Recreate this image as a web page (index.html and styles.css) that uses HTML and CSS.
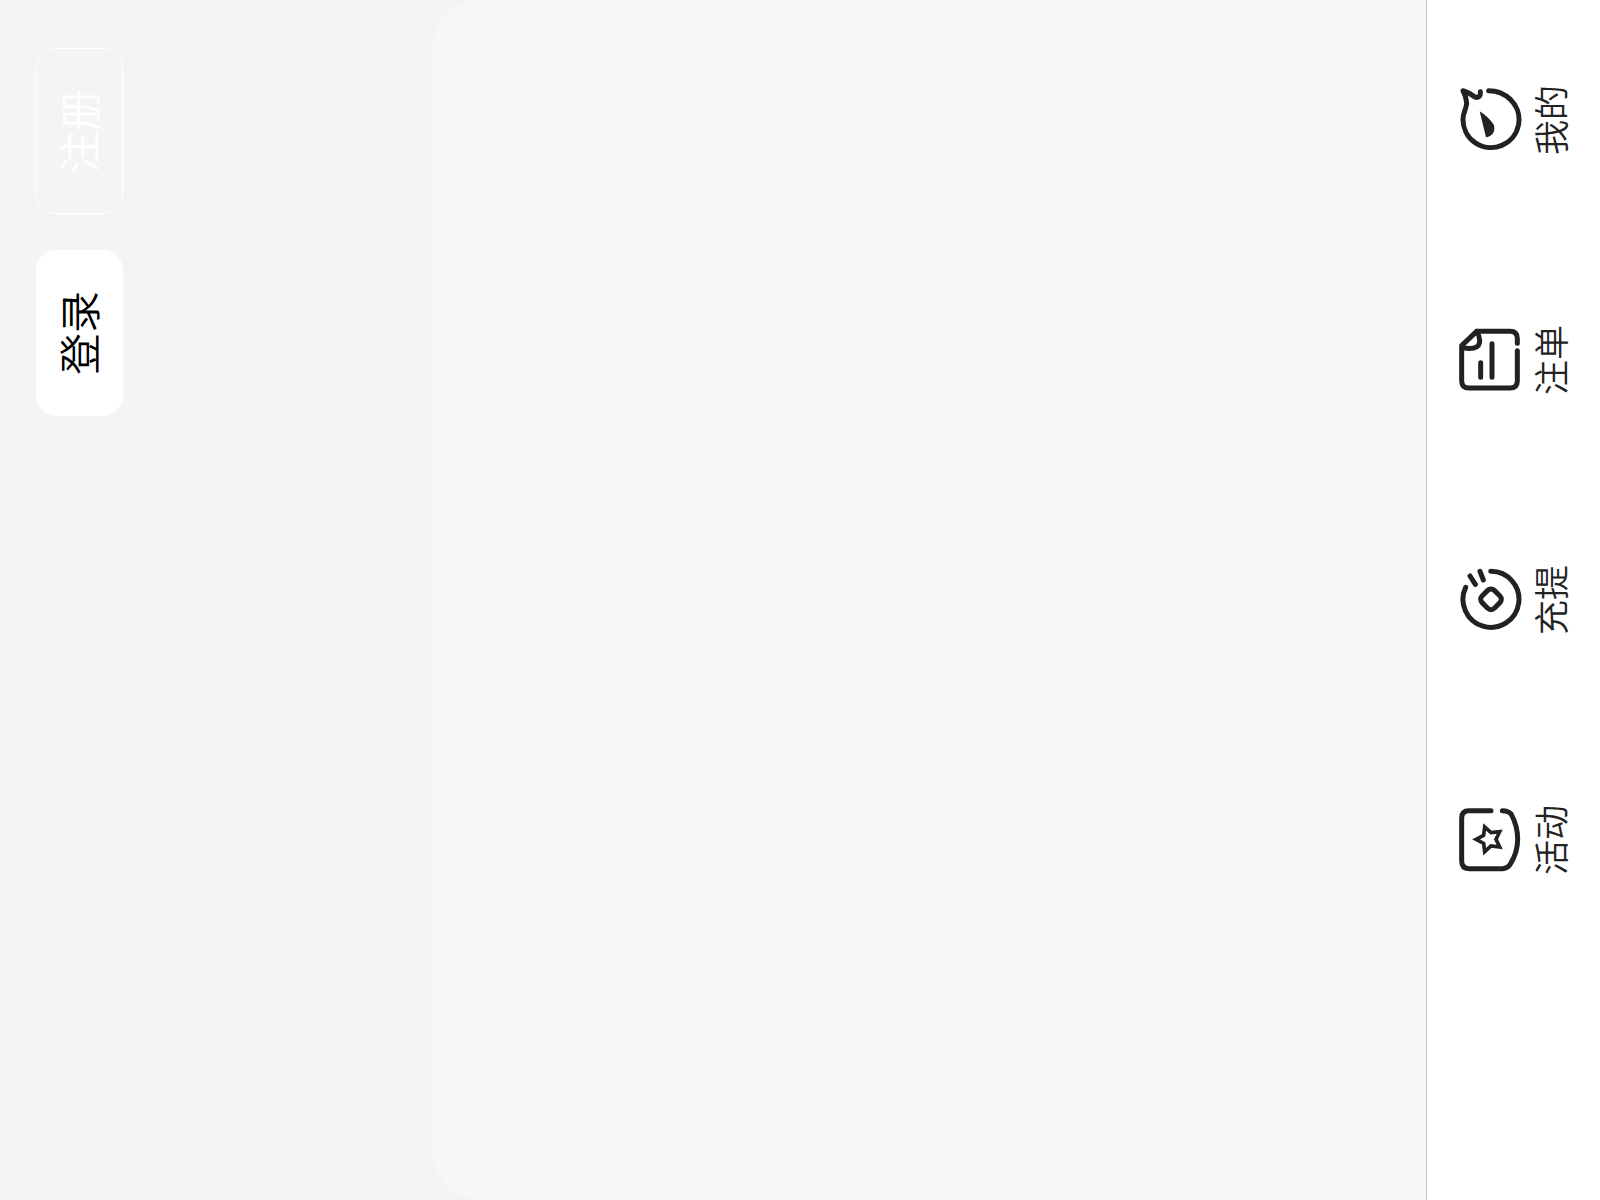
FILE: index.html
```html
<!DOCTYPE html>
<html lang="zh-CN">
<head>
    <meta charset="UTF-8">
    <meta name="viewport" content="width=device-width, initial-scale=1.0">
    <title>首页</title>
    <link rel="stylesheet" href="styles.css">
</head>
<body>
    <!-- portrait app, turned on its side -->
    <div class="app">
        <header class="header">
            <button type="button" class="btn btn-login">登录</button>
            <button type="button" class="btn btn-register">注册</button>
        </header>

        <main class="content"></main>

        <nav class="tabbar">
            <div class="tab"></div>
            <a class="tab" href="#activity">
                <svg class="tab-icon" viewBox="0 0 192 192" aria-hidden="true">
                    <path d="M184 99V33Q184 11 162 11H33Q10 11 10 33V134Q10 148 22 156Q58 179 98 179Q138 179 173 160Q184 152 184 133"/>
                    <path class="thin" d="M98 54L110 77L135 80L118 99L121 125L98 114L75 125L78 99L61 80L86 77Z"/>
                </svg>
                <span>活动</span>
            </a>
            <a class="tab" href="#wallet">
                <svg class="tab-icon" viewBox="0 0 192 192" aria-hidden="true">
                    <path d="M182 98A84 84 0 1 1 134 23"/>
                    <path d="M168 36L143 52M182 66L156 76"/>
                    <rect x="72" y="73" width="52" height="52" rx="14" transform="rotate(45 98 99)"/>
                </svg>
                <span>充提</span>
            </a>
            <a class="tab" href="#bets">
                <svg class="tab-icon" viewBox="0 0 192 192" aria-hidden="true">
                    <path d="M146 178H160Q182 178 182 156V56L139 11H34Q12 11 12 33V156Q12 178 34 178H124"/>
                    <path d="M182 56Q162 68 146 64Q126 60 132 16"/>
                    <path d="M88 68H44M145 102H44"/>
                </svg>
                <span>注单</span>
            </a>
            <a class="tab" href="#mine">
                <svg class="tab-icon" viewBox="0 0 192 192" aria-hidden="true">
                    <path d="M184 92Q184 130 158 157A84 84 0 1 1 98 15C120 15 130 26 148 26Q168 24 184 15Q178 34 168 46Q160 56 167 64Q172 68 181 67"/>
                    <path class="solid" d="M122 65Q106 91 81 108Q50 114 44 84Z"/>
                </svg>
                <span>我的</span>
            </a>
        </nav>
    </div>
</body>
</html>
```
FILE: styles.css
```css
* {
    box-sizing: border-box;
}
body {
    margin: 0;
    background-color: #f4f4f4;
    font-family: "Noto Sans CJK SC", sans-serif;
}
/* text runs bottom to top, rows stack left to right */
.app {
    display: flex;
    flex-direction: column;
    width: 100%;
    height: 100vh;
    writing-mode: sideways-lr;
}
.header {
    display: flex;
    justify-content: flex-end;
    align-items: flex-start;
    gap: 36px;
    width: 433px;
    padding: 48px 36px;
}
.btn {
    width: 87px;
    height: 166px;
    padding: 0 4px 0 0;
    border: 1px solid #fff;
    border-radius: 20px;
    font-family: inherit;
    font-size: 42px;
    font-weight: 350;
    line-height: 48px;
    writing-mode: sideways-lr;
    cursor: pointer;
}
.btn-login {
    background: #fff;
    color: #000;
}
.btn-register {
    background: transparent;
    color: #fff;
}
.content {
    flex: 1;
    border-radius: 48px 0 0 48px;
    background: #f7f7f7;
}
.tabbar {
    display: flex;
    width: 174px;
    border-left: 1px solid #c8c8c8;
    background: #fff;
}
.tab {
    flex: 1;
    display: flex;
    flex-direction: column;
    align-items: center;
    gap: 10px;
    padding-left: 31px;
    color: #222;
    font-size: 35px;
    font-weight: 350;
    line-height: 36px;
    text-decoration: none;
}
.tab-icon {
    width: 64px;
    height: 64px;
    fill: none;
    stroke: #222;
    stroke-width: 15px;
    stroke-linecap: round;
    stroke-linejoin: round;
    transform: rotate(-90deg);
}
.tab-icon .thin {
    stroke-width: 11px;
    stroke-linejoin: miter;
}
.tab-icon .solid {
    fill: #222;
    stroke: none;
}
```
